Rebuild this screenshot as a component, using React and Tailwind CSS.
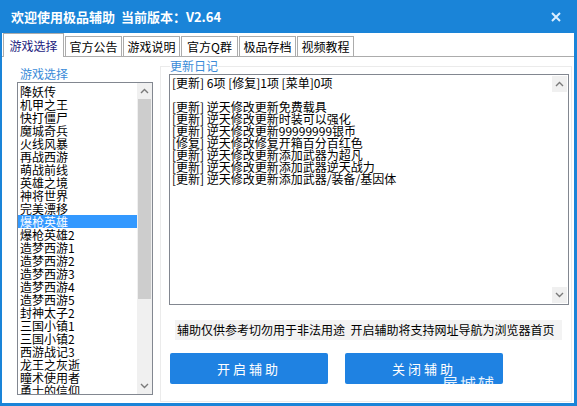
import React from "react";

const games = [
  "降妖传", "机甲之王", "快打僵尸", "魔城奇兵", "火线风暴", "再战西游", "萌战前线", "英雄之境",
  "神将世界", "完美漂移", "爆枪英雄", "爆枪英雄2", "造梦西游1", "造梦西游2", "造梦西游3",
  "造梦西游4", "造梦西游5", "封神太子2", "三国小镇1", "三国小镇2", "西游战记3", "龙王之灰逝",
  "瞳术使用者", "勇士的信仰",
];

const logs = [
  "[更新] 6项 [修复]1项 [菜单]0项",
  "",
  "[更新] 逆天修改更新免费载具",
  "[更新] 逆天修改更新时装可以强化",
  "[更新] 逆天修改更新99999999银币",
  "[修复] 逆天修改修复开箱百分百红色",
  "[更新] 逆天修改更新添加武器为超凡",
  "[更新] 逆天修改更新添加武器逆天战力",
  "[更新] 逆天修改更新添加武器/装备/基因体",
];

const tabs = ["官方公告", "游戏说明", "官方Q群", "极品存档", "视频教程"];

function Arrow({ up }) {
  return (
    <div className="h-[16px] w-[15px] flex items-center justify-center bg-[#f0f0f0]">
      <svg width="9" height="6" viewBox="0 0 9 6">
        <path d={up ? "M1 5 L4.5 1.5 L8 5" : "M1 1 L4.5 4.5 L8 1"} stroke="#7a7a7a" strokeWidth="1.4" fill="none" />
      </svg>
    </div>
  );
}

function App() {
  return (
    <div className="w-[577px] h-[406px] bg-[#1a84d8] flex flex-col pl-[2px] pr-[3px] pb-[3px] font-['Noto_Sans_CJK_SC',sans-serif] text-black">
      <div className="h-[33px] flex items-center justify-between pl-[9px] pr-[13px] text-white">
        <div className="text-[13px] font-bold leading-none">
          欢迎使用极品辅助&nbsp;&nbsp;当前版本：V2.64
        </div>
        <svg width="10" height="10" viewBox="0 0 10 10">
          <path d="M1 1 L9 9 M9 1 L1 9" stroke="#dbeeff" strokeWidth="2" />
        </svg>
      </div>

      <div className="flex-1 bg-white flex flex-col">
        <div className="h-[24px] flex items-end pl-[1px] border-b border-[#acacac]">
          <div className="h-[24px] w-[61px] -mb-px bg-white border border-b-0 border-[#acacac] flex items-center justify-center text-[12px] text-[#1c1c7e]">
            游戏选择
          </div>
          {tabs.map((t) => (
            <div key={t} className="h-[20px] w-[57px] ml-[1px] bg-white border border-b-0 border-[#acacac] flex items-center justify-center text-[12px]">
              {t}
            </div>
          ))}
        </div>

        <div className="flex-1 flex">
          <div className="ml-[15px] w-[136px] shrink-0 pt-[9px]">
            <div className="h-[16px] leading-[16px] text-[12px] text-[#3a8bd8] pl-[3px]">游戏选择</div>
            <div className="h-[313px] border border-[#828790] flex">
              <div className="flex-1 overflow-hidden pt-[2px]">
                {games.map((g, i) => (
                  <div key={g} className={"h-[13px] leading-[13px] text-[12px] pl-[2px] whitespace-nowrap " + (i === 10 ? "bg-[#3399ff] text-white" : "")}>
                    {g}
                  </div>
                ))}
              </div>
              <div className="w-[15px] bg-[#f0f0f0] flex flex-col">
                <Arrow up />
                <div className="h-[200px] mx-[1px] bg-[#cdcdcd]" />
                <div className="flex-1" />
                <Arrow />
              </div>
            </div>
          </div>

          <fieldset className="ml-[7px] mt-[1px] w-[412px] shrink-0 mb-[1px] border border-[#ebebeb] pl-[8px] pr-[2px]">
            <legend className="ml-[1px] text-[12px] leading-[16px] text-[#3a8bd8]">更新日记</legend>
            <div className="h-[231px] w-[400px] border border-[#828790] flex">
              <div className="flex-1 pt-[2px] pl-[2px]">
                {logs.map((l, i) => (
                  <div key={i} className="h-[12px] leading-[12px] text-[12px] whitespace-pre">
                    {l}
                  </div>
                ))}
              </div>
              <div className="w-[15px] flex flex-col justify-between py-[1px] mr-[1px]">
                <Arrow up />
                <Arrow />
              </div>
            </div>
            <div className="mt-[15px] ml-[6px] w-[387px] h-[20px] bg-[#f3f3f3] flex items-center text-[12px] pl-[2px] whitespace-pre">
              辅助仅供参考切勿用于非法用途  开启辅助将支持网址导航为浏览器首页
            </div>
            <div className="mt-[13px] ml-[1px] flex gap-[17px]">
              <button className="h-[31px] w-[158px] rounded-[2px] bg-[#1f82e2] text-white text-[13px] tracking-[3px]">
                开启辅助
              </button>
              <button className="relative overflow-hidden h-[31px] w-[158px] rounded-[2px] bg-[#1f82e2] text-white text-[13px] tracking-[3px]">
                关闭辅助
                <span className="absolute left-[90px] top-[22px] text-[16px] leading-none tracking-[2px] text-white/90">
                  屋城辅助
                </span>
              </button>
            </div>
          </fieldset>
        </div>
      </div>
    </div>
  );
}

export default App;
